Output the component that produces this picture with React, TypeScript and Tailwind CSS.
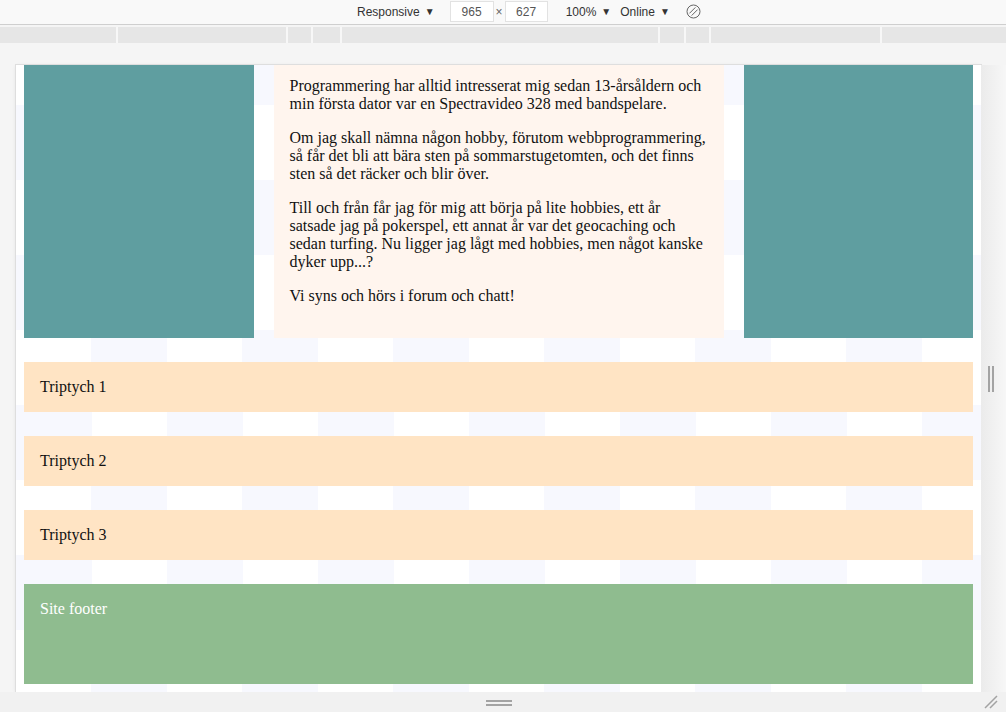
import React from "react";

// media query ruler segments (px widths), separated by thin light dividers
const rulerSegments = [116, 169, 23, 27, 317, 24, 23, 170, 124];

const paragraphs = [
  "Programmering har alltid intresserat mig sedan 13-årsåldern och min första dator var en Spectravideo 328 med bandspelare.",
  "Om jag skall nämna någon hobby, förutom webbprogrammering, så får det bli att bära sten på sommarstugetomten, och det finns sten så det räcker och blir över.",
  "Till och från får jag för mig att börja på lite hobbies, ett år satsade jag på pokerspel, ett annat år var det geocaching och sedan turfing. Nu ligger jag lågt med hobbies, men något kanske dyker upp...?",
  "Vi syns och hörs i forum och chatt!",
];

function Caret() {
  return <span className="ml-[5px] text-[10px] leading-none">▼</span>;
}

function RotateIcon() {
  return (
    <svg width="15" height="15" viewBox="0 0 15 15" fill="none" stroke="#666" strokeWidth="1">
      <circle cx="7.5" cy="7.5" r="6.5" />
      <path d="M3.4 9.4 L9.4 3.4 M5.6 11.6 L11.6 5.6" />
    </svg>
  );
}

function Toolbar() {
  return (
    <div className="flex h-[25px] items-center border-b border-[#cfcfcf] bg-[#f9f9f9] pb-[1px] pl-[357px] font-['Liberation_Sans',Arial,sans-serif] text-[12px] text-[#333]">
      <div className="flex items-center">
        Responsive
        <Caret />
      </div>
      <div className="ml-[15px] flex h-[21px] w-[44px] items-center justify-center border border-[#e2e2e2] bg-white text-[#555]">
        965
      </div>
      <span className="mx-[2px] text-[#666]">×</span>
      <div className="flex h-[21px] w-[43px] items-center justify-center border border-[#e2e2e2] bg-white text-[#555]">
        627
      </div>
      <div className="ml-[18px] flex items-center">
        100%
        <Caret />
      </div>
      <div className="ml-[9px] flex items-center">
        Online
        <Caret />
      </div>
      <div className="ml-[16px] flex items-center">
        <RotateIcon />
      </div>
    </div>
  );
}

function Ruler() {
  return (
    <div className="mt-[2px] flex h-[16px] bg-[#e6e6e6]">
      {rulerSegments.map((w, i) => (
        <React.Fragment key={i}>
          {i > 0 && <div className="h-full w-[2px] bg-[#f7f7f7]" />}
          <div className="h-full" style={{ width: w }} />
        </React.Fragment>
      ))}
    </div>
  );
}

function Page() {
  return (
    <div className="flex h-full flex-col gap-6 bg-white bg-[image:conic-gradient(#f7f8fe_0_25%,#ffffff_0_50%,#f7f8fe_0_75%,#ffffff_0)] bg-[length:151px_150px] bg-[position:0_-35px] px-2 pb-2 font-['Liberation_Serif','Times_New_Roman',serif] text-[16px] leading-[normal] text-[#111]">
      {/* hero: two image blocks around the aside */}
      <div className="grid h-[273px] shrink-0 grid-cols-[1fr_450px_1fr] gap-5">
        <div className="bg-[#5f9ea0]" />
        <div className="flex flex-col gap-4 bg-[#fff5ee] px-4 pt-[12px]">
          {paragraphs.map((p, i) => (
            <p key={i}>{p}</p>
          ))}
        </div>
        <div className="bg-[#5f9ea0]" />
      </div>

      {["Triptych 1", "Triptych 2", "Triptych 3"].map((t) => (
        <div key={t} className="h-[50px] shrink-0 bg-[#ffe4c4] px-4 pt-4">
          {t}
        </div>
      ))}

      <div className="h-[100px] shrink-0 bg-[#8fbc8f] px-4 pt-4 text-white">Site footer</div>
    </div>
  );
}

export default function App() {
  return (
    <div className="flex h-[712px] w-[1006px] flex-col overflow-hidden bg-[#f5f5f5]">
      <Toolbar />
      <Ruler />

      <div className="flex pt-[22px]">
        <div className="w-[16px] shrink-0" />
        <div className="h-[627px] w-[965px] shrink-0 overflow-hidden shadow-[0_0_0_1px_#dedede,0_1px_4px_rgba(0,0,0,0.1)]">
          <Page />
        </div>
        {/* right resize handle */}
        <div className="flex h-[627px] flex-1 items-center justify-start bg-gradient-to-r from-[#ebebeb] to-[#f7f7f7] pl-[7px]">
          <div className="flex gap-[2px]">
            <div className="h-[26px] w-[2px] bg-[#a3a3a3]" />
            <div className="h-[26px] w-[2px] bg-[#a3a3a3]" />
          </div>
        </div>
      </div>

      {/* bottom resize handle */}
      <div className="relative flex flex-1 bg-[#f1f1f1]">
        <div className="w-[486px]" />
        <div className="flex flex-col gap-[2px] pt-[8px]">
          <div className="h-[2px] w-[26px] bg-[#a3a3a3]" />
          <div className="h-[2px] w-[26px] bg-[#a3a3a3]" />
        </div>
        <svg className="absolute right-[8px] bottom-[3px]" width="14" height="14" viewBox="0 0 14 14" stroke="#a3a3a3" strokeWidth="1.5">
          <path d="M1 13 L13 1 M6 13 L13 6" />
        </svg>
      </div>
    </div>
  );
}
